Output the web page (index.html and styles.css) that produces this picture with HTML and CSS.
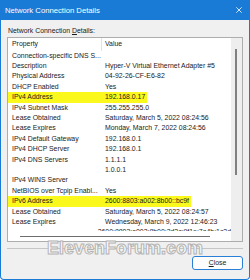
FILE: index.html
```html
<!DOCTYPE html>
<html>
<head>
<meta charset="utf-8">
<link rel="stylesheet" href="styles.css">
</head>
<body>
<div class="window">
  <div class="titlebar">
    <span class="title">Network Connection Details</span>
    <svg class="xicon" width="6" height="6" viewBox="0 0 6 6"><path d="M0.3 0.3 L5.7 5.7 M5.7 0.3 L0.3 5.7" stroke="#fff" stroke-width="0.8" fill="none"/></svg>
  </div>
  <div class="content">
    <div class="label">Network Connection <u>D</u>etails:</div>
    <div class="listbox">
      <div class="main">
        <div class="rows">
          <div class="row head"><div class="c1">Property</div><div class="c2">Value</div></div>
          <div class="row"><div class="c1">Connection-specific DNS S...</div><div class="c2"></div></div>
          <div class="row"><div class="c1">Description</div><div class="c2">Hyper-V Virtual Ethernet Adapter #5</div></div>
          <div class="row"><div class="c1">Physical Address</div><div class="c2">04-92-26-CF-E6-82</div></div>
          <div class="row"><div class="c1">DHCP Enabled</div><div class="c2">Yes</div></div>
          <div class="row hl"><div class="c1">IPv4 Address</div><div class="c2"><span class="mark">192.168.0.17</span></div></div>
          <div class="row"><div class="c1">IPv4 Subnet Mask</div><div class="c2">255.255.255.0</div></div>
          <div class="row"><div class="c1">Lease Obtained</div><div class="c2">Saturday, March 5, 2022 08:24:56</div></div>
          <div class="row"><div class="c1">Lease Expires</div><div class="c2">Monday, March 7, 2022 08:24:56</div></div>
          <div class="row"><div class="c1">IPv4 Default Gateway</div><div class="c2">192.168.0.1</div></div>
          <div class="row"><div class="c1">IPv4 DHCP Server</div><div class="c2">192.168.0.1</div></div>
          <div class="row"><div class="c1">IPv4 DNS Servers</div><div class="c2">1.1.1.1</div></div>
          <div class="row"><div class="c1"></div><div class="c2">1.0.0.1</div></div>
          <div class="row"><div class="c1">IPv4 WINS Server</div><div class="c2"></div></div>
          <div class="row"><div class="c1">NetBIOS over Tcpip Enabl...</div><div class="c2">Yes</div></div>
          <div class="row hl"><div class="c1">IPv6 Address</div><div class="c2"><span class="mark">2600:8803:a002:8b00::bc9f</span></div></div>
          <div class="row"><div class="c1">Lease Obtained</div><div class="c2">Saturday, March 5, 2022 08:24:57</div></div>
          <div class="row"><div class="c1">Lease Expires</div><div class="c2">Wednesday, March 9, 2022 12:46:23</div></div>
          <div class="row"><div class="c1"></div><div class="c2">2600:8803:a002:8b00:3d2c:9f1e:7a4b:1c2d</div></div>
        </div>
        <div class="hscroll"><div class="hthumb"></div></div>
      </div>
      <div class="vscroll"><div class="vthumb"></div></div>
    </div>
    <div class="sep"></div>
    <div class="footer"><div class="btn"><u>C</u>lose</div></div>
    <div class="watermark">ElevenForum.com</div>
  </div>
</div>
</body>
</html>
```
FILE: styles.css
```css
html, body { margin: 0; padding: 0; }
body {
  width: 250px;
  height: 280px;
  overflow: hidden;
  background: #fff;
  font-family: "Liberation Sans", Arial, sans-serif;
  color: #1a1a1a;
}
.window {
  width: 250px;
  height: 280px;
  box-sizing: border-box;
  background: #1a7bd6;
  border-radius: 0 0 4px 4px;
  display: flex;
  flex-direction: column;
}
.titlebar {
  height: 20px;
  flex: none;
  display: flex;
  align-items: center;
  justify-content: space-between;
  padding: 0 8px 0 5px;
  color: #fff;
  font-size: 7.7px;
}
.xicon { display: block; }
.content {
  flex: 1;
  margin: 0 1px 1px 1px;
  background: #f0f0f0;
  border-radius: 0 0 3px 3px;
  position: relative;
  display: flex;
  flex-direction: column;
  padding: 6px 6px 0 6px;
}
.label {
  font-size: 6.9px;
  line-height: 10px;
  height: 10px;
  padding-left: 1px;
}
.listbox {
  margin-top: 1px;
  height: 205px;
  box-sizing: border-box;
  border: 1px solid #adadad;
  display: flex;
}
.main {
  flex: 1;
  min-width: 0;
  background: #fff;
  display: flex;
  flex-direction: column;
}
.rows {
  flex: 1;
  overflow: hidden;
  font-size: 6.9px;
}
.row {
  display: flex;
  height: 10.42px;
  line-height: 10.42px;
  white-space: nowrap;
}
.row.head {
  height: 12.5px;
  line-height: 12.5px;
}
.c1 {
  width: 89px;
  padding-left: 4px;
  border-right: 1px solid transparent;
  overflow: hidden;
}
.head .c1 { border-right-color: #e3e3e3; }
.c2 {
  padding-left: 3px;
  flex: 1;
}
.hl .c1 { background: #fbf81e; }
.hl .c2 { padding-left: 0; }
.mark {
  background: #fbf81e;
  padding: 0 2px 0 3px;
  display: inline-block;
  height: 100%;
}
.hscroll {
  height: 10.5px;
  flex: none;
  padding-top: 5px;
  box-sizing: border-box;
}
.hthumb {
  margin-left: 12px;
  width: 190px;
  height: 1px;
  background: #6e6e6e;
}
.vscroll {
  width: 11px;
  flex: none;
  background: #eeeeee;
  padding-top: 11px;
  box-sizing: border-box;
}
.vthumb {
  margin-left: 4px;
  width: 1.5px;
  height: 126px;
  background: #808080;
}
.sep {
  margin-top: 6px;
  height: 1px;
  background: #c6c6c6;
}
.footer {
  display: flex;
  justify-content: flex-end;
  margin-top: 7px;
}
.btn {
  width: 51px;
  height: 14px;
  box-sizing: border-box;
  border: 1px solid #2a7fd6;
  border-radius: 3px;
  background: #fdfdfd;
  font-size: 6.9px;
  line-height: 12px;
  text-align: center;
}
.watermark {
  position: absolute;
  left: 46px;
  top: 218.5px;
  font-size: 18px;
  line-height: 18px;
  font-weight: bold;
  color: #fafafa;
  -webkit-text-stroke: 1px #b4b4b4;
  white-space: nowrap;
}
```
